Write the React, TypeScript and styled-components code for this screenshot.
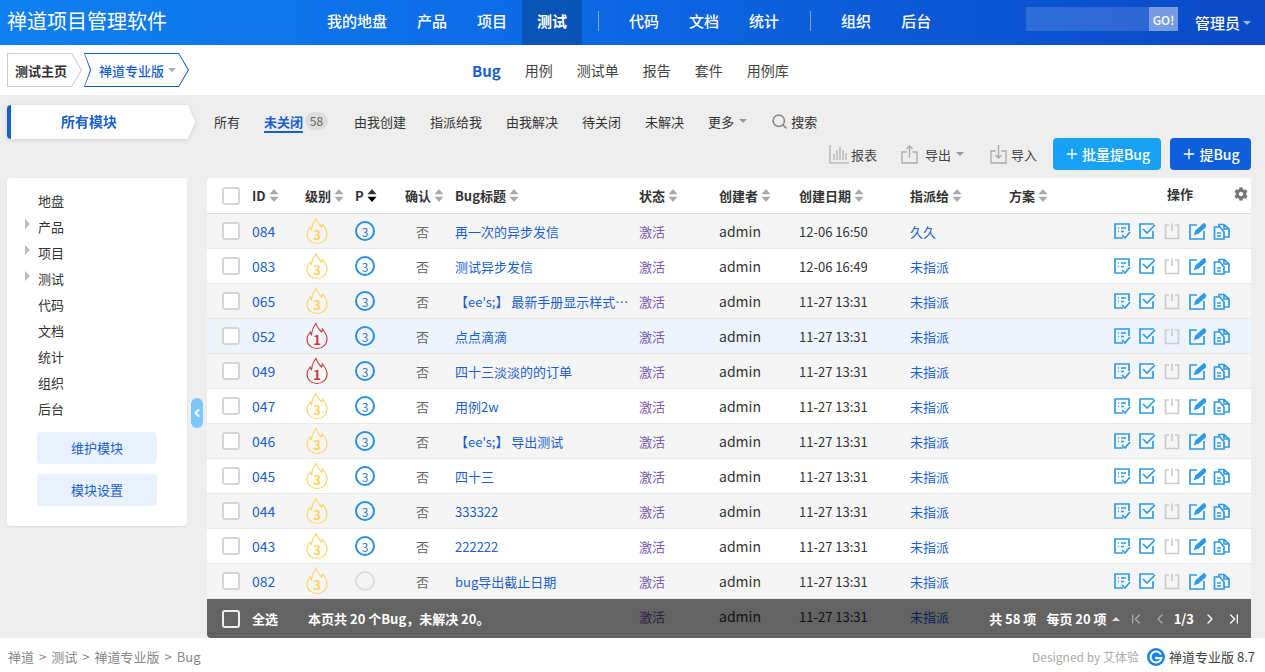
import React from 'react';
import styled, { createGlobalStyle } from 'styled-components';
import { ChevronFirst, ChevronLast, ChevronLeft, ChevronRight, Plus, Search } from 'lucide-react';
import { FaCog } from 'react-icons/fa';

const BLUE = '#1a5fd0';
const ICON_BLUE = '#2f9ae6';
const GRID = '45px 53px 50px 50px 50px 184px 80px 80px 111px 99px 1fr 140px';

const GlobalStyle = createGlobalStyle`
  html, body { margin: 0; height: 100%; }
  body {
    font-family: "Noto Sans CJK SC", "Noto Sans", sans-serif;
    font-size: 13px;
    color: #333;
    background: #fff;
    overflow: hidden;
  }
  * { box-sizing: border-box; }
`;

const Page = styled.div`
  display: flex;
  flex-direction: column;
  height: 672px;
`;

const Header = styled.header`
  display: flex;
  align-items: stretch;
  height: 45px;
  flex: none;
  color: #fff;
  background: linear-gradient(90deg, #0f80f2 0%, #0c66e2 50%, #0b49c8 100%);
`;

const Brand = styled.div`
  width: 312px;
  padding-left: 7px;
  font-size: 20px;
  line-height: 42px;
`;

const NavItem = styled.a<{ $active?: boolean }>`
  padding: 0 15px;
  font-size: 15px;
  line-height: 41px;
  font-weight: ${p => (p.$active ? 700 : 500)};
  background: ${p => (p.$active ? 'rgba(0, 0, 0, 0.2)' : 'transparent')};
`;

const NavDivider = styled.span`
  width: 1px;
  height: 20px;
  margin: 11px 15px 0 16px;
  background: rgba(255, 255, 255, 0.45);
`;

const SearchBox = styled.div`
  display: flex;
  width: 152px;
  height: 24px;
  margin: 7px 0 0 auto;
  background: rgba(255, 255, 255, 0.14);
`;

const SearchGo = styled.span`
  width: 29px;
  margin-left: auto;
  font-size: 12px;
  font-weight: 500;
  line-height: 25px;
  text-align: center;
  background: rgba(255, 255, 255, 0.35);
`;

const UserMenu = styled.div`
  display: flex;
  align-items: center;
  gap: 3px;
  padding: 0 14px 0 17px;
  font-size: 15px;
  font-weight: 500;
`;

const Caret = styled.i<{ $color?: string; $up?: boolean }>`
  display: inline-block;
  width: 0;
  height: 0;
  border-left: 4px solid transparent;
  border-right: 4px solid transparent;
  ${p => (p.$up ? 'border-bottom' : 'border-top')}: 4px solid ${p => p.$color ?? '#999'};
`;

const SubBar = styled.div`
  display: flex;
  align-items: center;
  height: 50px;
  flex: none;
  padding-left: 7px;
  background: #fff;
`;

const Crumb = styled.a<{ $active?: boolean }>`
  position: relative;
  display: flex;
  align-items: center;
  height: 34px;
  font-weight: ${p => (p.$active ? 500 : 600)};
  color: ${p => (p.$active ? BLUE : '#333')};
  width: ${p => (p.$active ? '105px' : '75px')};
  margin-right: ${p => (p.$active ? 0 : '2px')};
  padding-left: ${p => (p.$active ? '15px' : '8px')};
  background: ${p => (p.$active ? BLUE : '#ccc')};
  gap: 4px;
  clip-path: ${p =>
    p.$active
      ? 'polygon(0 0, 95px 0, 100% 50%, 95px 100%, 0 100%, 6px 50%)'
      : 'polygon(0 0, 65px 0, 100% 50%, 65px 100%, 0 100%)'};
  &::before {
    content: '';
    position: absolute;
    inset: 0;
    z-index: 0;
    background: #fff;
    clip-path: ${p =>
      p.$active
        ? 'polygon(1px 1px, 94.5px 1px, 103.8px 50%, 94.5px 33px, 1px 33px, 7.2px 50%)'
        : 'polygon(1px 1px, 64.5px 1px, 73.8px 50%, 64.5px 33px, 1px 33px)'};
  }
  & > * { position: relative; }
`;

const SubMenu = styled.nav`
  display: flex;
  align-items: center;
  gap: 24px;
  margin-left: 283px;
  font-size: 14px;
  color: #444;
`;

const SubMenuItem = styled.a<{ $active?: boolean }>`
  ${p => p.$active && `color: ${BLUE}; font-weight: 700; font-size: 15px;`}
`;

const Main = styled.main`
  flex: 1;
  min-height: 0;
  padding: 10px 14px 0 7px;
  background: #eee;
  overflow: hidden;
`;

const FeatureBar = styled.div`
  display: flex;
  align-items: center;
  height: 32px;
  margin-bottom: 2px;
  gap: 24px;
  color: #333;
`;

const ModuleWrap = styled.div`
  filter: drop-shadow(0 1px 2px rgba(0, 0, 0, 0.12));
  margin-right: -5px;
  margin-bottom: -2px;
`;

const ModuleTitle = styled.div`
  width: 188px;
  height: 34px;
  padding-right: 28px;
  border-left: 4px solid ${BLUE};
  border-radius: 4px 0 0 4px;
  font-size: 14px;
  font-weight: 700;
  line-height: 33px;
  text-align: center;
  color: ${BLUE};
  background: #fff;
  clip-path: polygon(0 0, 181px 0, 100% 50%, 181px 100%, 0 100%);
`;

const FilterTab = styled.a<{ $active?: boolean }>`
  display: inline-flex;
  align-items: center;
  height: 24px;
  position: relative;
  ${p =>
    p.$active &&
    `color: ${BLUE}; font-weight: 700; box-shadow: inset 0 -2px 0 ${BLUE};`}
`;

const CountBadge = styled.span`
  min-width: 23px;
  height: 18px;
  margin: 0 2px 0 -22px;
  border-radius: 9px;
  font-size: 12px;
  line-height: 18px;
  text-align: center;
  color: #666;
  background: #ddd;
`;

const InlineGroup = styled.span<{ $gap?: number }>`
  display: inline-flex;
  align-items: center;
  gap: ${p => p.$gap ?? 5}px;
`;

const Toolbar = styled.div`
  display: flex;
  align-items: center;
  justify-content: flex-end;
  height: 32px;
  margin-top: -1px;
`;

const ToolLink = styled.a<{ $width: number }>`
  display: flex;
  align-items: center;
  width: ${p => p.$width}px;
  gap: 2px;
  color: #444;
`;

const ActionButton = styled.a<{ $width: number; $color: string }>`
  display: flex;
  align-items: center;
  justify-content: center;
  gap: 2px;
  width: ${p => p.$width}px;
  height: 32px;
  margin-left: 9px;
  border-radius: 4px;
  font-size: 14px;
  font-weight: 500;
  color: #fff;
  background: ${p => p.$color};
`;

const Content = styled.div`
  display: flex;
  align-items: flex-start;
  gap: 20px;
  height: 460px;
  margin-top: 8px;
`;

const Sidebar = styled.aside`
  position: relative;
  width: 180px;
  flex: none;
  height: 348px;
  padding: 9px 0;
  border-radius: 4px;
  background: #fff;
  box-shadow: 0 1px 2px rgba(0, 0, 0, 0.08);
`;

const TreeRow = styled.div`
  display: flex;
  align-items: center;
  height: 26px;
  padding-left: 18px;
  color: #333;
`;

const TreeCaret = styled.i<{ $show: boolean }>`
  width: 13px;
  height: 10px;
  margin-top: -4px;
  background: ${p => (p.$show ? '#bbb' : 'transparent')};
  clip-path: polygon(0 0, 5px 50%, 0 100%);
`;

const ModuleButton = styled.a`
  display: block;
  width: 120px;
  height: 32px;
  margin: 10px 0 0 30px;
  border-radius: 4px;
  line-height: 32px;
  text-align: center;
  color: ${BLUE};
  background: #e8f1fc;
  &:first-of-type { margin-top: 11px; }
`;

const CollapseHandle = styled.span`
  position: absolute;
  top: 220px;
  right: -16px;
  display: flex;
  align-items: center;
  justify-content: center;
  width: 12px;
  height: 30px;
  border-radius: 6px;
  color: #fff;
  background: #7cc6fa;
`;

const TableCard = styled.section`
  position: relative;
  flex: 1;
  height: 460px;
  overflow: hidden;
  border-radius: 4px 4px 0 0;
  background: #fff;
`;

const HeadRow = styled.div`
  display: grid;
  grid-template-columns: ${GRID};
  align-items: center;
  height: 36px;
  border-bottom: 1px solid #ddd;
  font-weight: 700;
  color: #333;
`;

const Row = styled.div<{ $bg: string }>`
  display: grid;
  grid-template-columns: ${GRID};
  align-items: center;
  height: 35px;
  border-bottom: 1px solid #e8e8e8;
  background: ${p => p.$bg};
`;

const Cell = styled.div<{ $center?: boolean; $color?: string; $size?: number }>`
  min-width: 0;
  overflow: hidden;
  white-space: nowrap;
  text-overflow: ellipsis;
  padding-right: 8px;
  ${p => p.$center && 'text-align: center;'}
  color: ${p => p.$color ?? 'inherit'};
  font-size: ${p => p.$size ?? 13}px;
`;

const IconCell = styled.div`
  display: flex;
  align-items: center;
`;

const HeadCell = styled.div`
  display: flex;
  align-items: center;
  gap: 3px;
`;

const OpsHead = styled.div`
  grid-column: 12;
  display: flex;
  align-items: center;
  justify-content: space-between;
  padding: 0 3px 4px 56px;
`;

const CheckBox = styled.span<{ $light?: boolean }>`
  display: block;
  width: 18px;
  height: 18px;
  margin-left: 15px;
  border: 2px solid ${p => (p.$light ? '#eee' : '#d5d5d5')};
  border-radius: 3px;
  background: ${p => (p.$light ? 'transparent' : '#fff')};
`;

const PriorityMark = styled.span<{ $empty?: boolean }>`
  display: flex;
  align-items: center;
  justify-content: center;
  width: 20px;
  height: 20px;
  border: 2px solid ${p => (p.$empty ? '#ddd' : '#2a8fe0')};
  border-radius: 50%;
  font-size: 12px;
  color: #3a78cc;
`;

const Ops = styled.div`
  display: flex;
  align-items: center;
  gap: 7px;
  padding-left: 2px;
`;

const TableFooter = styled.div`
  position: absolute;
  left: 0;
  right: 0;
  bottom: 0;
  display: flex;
  align-items: center;
  height: 39px;
  border-radius: 0 0 0 4px;
  color: #fff;
  font-weight: 600;
  background: rgba(0, 0, 0, 0.61);
`;

const SelectAll = styled.span`
  margin-left: 12px;
`;

const Summary = styled.span`
  margin-left: 30px;
`;

const Pager = styled.div`
  display: flex;
  align-items: center;
  margin-left: auto;
  padding-right: 9px;
  gap: 6px;
`;

const PagerIcon = styled.span<{ $dim?: boolean }>`
  display: flex;
  margin-left: 2px;
  color: ${p => (p.$dim ? '#aaa' : '#fff')};
`;

const PageFooter = styled.footer`
  display: flex;
  align-items: center;
  height: 34px;
  flex: none;
  padding: 3px 10px 0 8px;
  color: #888;
  background: #fff;
`;

const Trail = styled.span`
  display: flex;
  align-items: center;
  gap: 5px;
`;

const Credit = styled.span`
  margin-left: auto;
  color: #aaa;
  font-size: 12px;
`;

const Version = styled.span`
  display: flex;
  align-items: center;
  gap: 4px;
  margin-left: 8px;
  color: #444;
`;

const Flame = ({ level }: { level: number }) => {
  const color = level === 1 ? '#c8373a' : '#fbd45e';
  return (
    <svg width="24" height="28" viewBox="0 0 24 28">
      <path
        d="M11 1.5c1 4.5 3.5 6 5.500 8.500.6-1 .9-2 .9-3 2.600 3 4.600 6.500 4.600 10 0 5.500-4.500 9.500-10 9.500S2 22.500 2 17c0-3 1.500-5 3.200-7 .2 1.200.6 2 1.300 2.600C7 8 8.500 4.500 11 1.500z"
        fill="none"
        stroke={color}
        strokeWidth="1.1"
      />
      <text x="12" y="23" textAnchor="middle" fontSize="13" fontWeight="700" fill={color}>
        {level}
      </text>
    </svg>
  );
};

const SortIcon = ({ active }: { active?: boolean }) => (
  <svg width="10" height="13" viewBox="0 0 10 13">
    <path d="M5 0l4.500 5.200H.5z" fill={active ? '#333' : '#aaa'} />
    <path d="M5 13L.5 7.800h9z" fill={active ? '#000' : '#aaa'} />
  </svg>
);

const OpIcon = ({ kind }: { kind: number }) => {
  const color = kind === 2 ? '#ccc' : ICON_BLUE;
  const shapes = [
    <>
      <path d="M10 16H2V2h14v7" />
      <path d="M5 6h1M8 6h5M5 9.500h1M8 9.500h3M9 13l3 3 5-6" />
    </>,
    <>
      <path d="M15 9v7H2V2h14" />
      <path d="M5 7l4 4 8-8" />
    </>,
    <path d="M6 3H2.500v13.500h13V3H12M9 1.500V9" />,
    <>
      <path d="M9 3H2v14h14V9" />
      <path d="M7 12l1-3 8-7 2 2-8 7z" fill={color} />
    </>,
    <>
      <path d="M6 5H1.500v12h9.500V10L7 5z" />
      <path d="M6 5V2.500h5l5 4.500v8h-5M11 2.500V7h5" />
      <path d="M4 11h4M4 14h4" />
    </>,
  ];
  return (
    <svg width="18" height="18" viewBox="0 0 18 18" fill="none" stroke={color} strokeWidth="1.700">
      {shapes[kind]}
    </svg>
  );
};

const ChartIcon = () => (
  <svg width="20" height="20" viewBox="0 0 20 20" fill="none" stroke="#aaa" strokeWidth="1.200">
    <path d="M1 1v18h19M5 10v6M8 6v10M11 3v13M14 6v10M17 9v7" />
  </svg>
);

const ExportIcon = () => (
  <svg width="20" height="20" viewBox="0 0 20 20" fill="none" stroke="#aaa" strokeWidth="1.300">
    <path d="M6.500 8H2v11h15V8h-4.500M9.500 14V2M6.500 5l3-3 3 3" />
  </svg>
);

const ImportIcon = () => (
  <svg width="20" height="20" viewBox="0 0 20 20" fill="none" stroke="#aaa" strokeWidth="1.300">
    <path d="M6.500 7H2v12h15V7h-4.500M9.500 1v13M6.500 11l3 3 3-3" />
  </svg>
);

const ZentaoLogo = () => (
  <svg width="18" height="18" viewBox="0 0 18 18">
    <circle cx="9" cy="9" r="9" fill="#1683e8" />
    <path d="M14 6.500A5.500 5.500 0 1 0 14.500 10H9" fill="none" stroke="#fff" strokeWidth="2" />
    <circle cx="9.500" cy="10" r="1.500" fill="#fff" />
  </svg>
);

interface Bug {
  id: string;
  severity: number;
  priority?: number;
  title: string;
  date: string;
  assignee: string;
  hover?: boolean;
}

const bugs: Bug[] = [
  { id: '084', severity: 3, priority: 3, title: '再一次的异步发信', date: '12-06 16:50', assignee: '久久' },
  { id: '083', severity: 3, priority: 3, title: '测试异步发信', date: '12-06 16:49', assignee: '未指派' },
  { id: '065', severity: 3, priority: 3, title: "【ee's;】 最新手册显示样式问题", date: '11-27 13:31', assignee: '未指派' },
  { id: '052', severity: 1, priority: 3, title: '点点滴滴', date: '11-27 13:31', assignee: '未指派', hover: true },
  { id: '049', severity: 1, priority: 3, title: '四十三淡淡的的订单', date: '11-27 13:31', assignee: '未指派' },
  { id: '047', severity: 3, priority: 3, title: '用例2w', date: '11-27 13:31', assignee: '未指派' },
  { id: '046', severity: 3, priority: 3, title: "【ee's;】 导出测试", date: '11-27 13:31', assignee: '未指派' },
  { id: '045', severity: 3, priority: 3, title: '四十三', date: '11-27 13:31', assignee: '未指派' },
  { id: '044', severity: 3, priority: 3, title: '333322', date: '11-27 13:31', assignee: '未指派' },
  { id: '043', severity: 3, priority: 3, title: '222222', date: '11-27 13:31', assignee: '未指派' },
  { id: '082', severity: 3, title: 'bug导出截止日期', date: '11-27 13:31', assignee: '未指派' },
];

const columns = ['ID', '级别', 'P', '确认', 'Bug标题', '状态', '创建者', '创建日期', '指派给', '方案'];
const mainNav = ['我的地盘', '产品', '项目', '测试'];
const midNav = ['代码', '文档', '统计'];
const endNav = ['组织', '后台'];
const tree = ['地盘', '产品', '项目', '测试', '代码', '文档', '统计', '组织', '后台'];
const filters = ['由我创建', '指派给我', '由我解决', '待关闭', '未解决'];

const rowBg = (bug: Bug, index: number) => {
  if (bug.hover) return '#eef4fc';
  return index % 2 === 0 ? '#f5f5f5' : '#fff';
};

export default function App() {
  return (
    <Page>
      <GlobalStyle />
      <Header>
        <Brand>禅道项目管理软件</Brand>
        {mainNav.map(item => (
          <NavItem key={item} $active={item === '测试'}>{item}</NavItem>
        ))}
        <NavDivider />
        {midNav.map(item => <NavItem key={item}>{item}</NavItem>)}
        <NavDivider />
        {endNav.map(item => <NavItem key={item}>{item}</NavItem>)}
        <SearchBox><SearchGo>GO!</SearchGo></SearchBox>
        <UserMenu>管理员<Caret $color="rgba(255,255,255,.6)" /></UserMenu>
      </Header>

      <SubBar>
        <Crumb><span>测试主页</span></Crumb>
        <Crumb $active><span>禅道专业版</span><Caret $color="#aab" /></Crumb>
        <SubMenu>
          <SubMenuItem $active>Bug</SubMenuItem>
          <SubMenuItem>用例</SubMenuItem>
          <SubMenuItem>测试单</SubMenuItem>
          <SubMenuItem>报告</SubMenuItem>
          <SubMenuItem>套件</SubMenuItem>
          <SubMenuItem>用例库</SubMenuItem>
        </SubMenu>
      </SubBar>

      <Main>
        <FeatureBar>
          <ModuleWrap><ModuleTitle>所有模块</ModuleTitle></ModuleWrap>
          <FilterTab>所有</FilterTab>
          <FilterTab $active>未关闭</FilterTab>
          <CountBadge>58</CountBadge>
          {filters.map(item => <FilterTab key={item}>{item}</FilterTab>)}
          <InlineGroup>更多<Caret /></InlineGroup>
          <InlineGroup $gap={3}><Search size={17} color="#888" strokeWidth={2.2} />搜索</InlineGroup>
        </FeatureBar>

        <Toolbar>
          <ToolLink $width={71}><ChartIcon />报表</ToolLink>
          <ToolLink $width={89}><ExportIcon /><InlineGroup>&nbsp;导出<Caret /></InlineGroup></ToolLink>
          <ToolLink $width={55}><ImportIcon />导入</ToolLink>
          <ActionButton $width={108} $color="#17a2f5">
            <Plus size={16} />批量提Bug
          </ActionButton>
          <ActionButton $width={81} $color="#0f5fdc"><Plus size={16} />提Bug</ActionButton>
        </Toolbar>

        <Content>
          <Sidebar>
            {tree.map((item, i) => (
              <TreeRow key={item}>
                <TreeCaret $show={i >= 1 && i <= 3} />
                {item}
              </TreeRow>
            ))}
            <ModuleButton>维护模块</ModuleButton>
            <ModuleButton>模块设置</ModuleButton>
            <CollapseHandle><ChevronLeft size={12} strokeWidth={4} /></CollapseHandle>
          </Sidebar>

          <TableCard>
            <HeadRow>
              <CheckBox />
              {columns.map(col => (
                <HeadCell key={col}>{col}<SortIcon active={col === 'P'} /></HeadCell>
              ))}
              <OpsHead>操作<FaCog size={14} color="#777" /></OpsHead>
            </HeadRow>
            {bugs.map((bug, i) => (
              <Row key={bug.id} $bg={rowBg(bug, i)}>
                <CheckBox />
                <Cell $color={BLUE} $size={14}>{bug.id}</Cell>
                <IconCell><Flame level={bug.severity} /></IconCell>
                <IconCell>
                  <PriorityMark $empty={!bug.priority}>{bug.priority}</PriorityMark>
                </IconCell>
                <Cell $center $color="#666" style={{ paddingRight: 15 }}>否</Cell>
                <Cell $color={BLUE}>{bug.title}</Cell>
                <Cell $color="#7a5cb0">激活</Cell>
                <Cell $size={14}>admin</Cell>
                <Cell>{bug.date}</Cell>
                <Cell $color={BLUE}>{bug.assignee}</Cell>
                <Cell />
                <Ops>
                  {[0, 1, 2, 3, 4].map(kind => <OpIcon key={kind} kind={kind} />)}
                </Ops>
              </Row>
            ))}
            <Row $bg="#fff">
              <span />
              <Cell /><Cell /><Cell /><Cell /><Cell />
              <Cell $color="#7a5cb0">激活</Cell>
              <Cell $size={14}>admin</Cell>
              <Cell>11-27 13:31</Cell>
              <Cell $color={BLUE}>未指派</Cell>
            </Row>
            <TableFooter>
              <CheckBox $light />
              <SelectAll>全选</SelectAll>
              <Summary>本页共 20 个Bug，未解决 20。</Summary>
              <Pager>
                <span>共 58 项</span>
                <InlineGroup style={{ marginLeft: 4 }}>每页 20 项<Caret $color="#ddd" $up /></InlineGroup>
                <PagerIcon $dim><ChevronFirst size={16} /></PagerIcon>
                <PagerIcon $dim><ChevronLeft size={16} /></PagerIcon>
                <span>1/3</span>
                <PagerIcon><ChevronRight size={16} /></PagerIcon>
                <PagerIcon><ChevronLast size={16} /></PagerIcon>
              </Pager>
            </TableFooter>
          </TableCard>
        </Content>
      </Main>

      <PageFooter>
        <Trail>
          <span>禅道</span>&gt;<span>测试</span>&gt;<span>禅道专业版</span>&gt;<span>Bug</span>
        </Trail>
        <Credit>Designed by 艾体验</Credit>
        <Version><ZentaoLogo />禅道专业版 8.7</Version>
      </PageFooter>
    </Page>
  );
}
